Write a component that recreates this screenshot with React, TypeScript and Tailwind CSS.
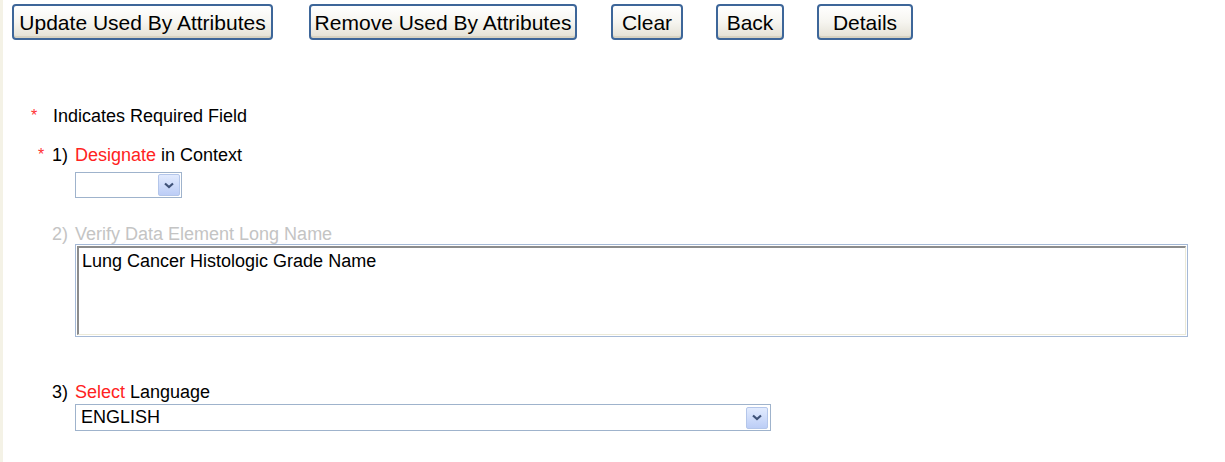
const btn =
  "h-[36px] rounded-[4px] border-2 border-[#3d6699] bg-gradient-to-b from-[#ffffff] via-[#f6f5f0] to-[#e3e0d4] text-[21px] leading-none text-black shadow-[inset_0_-2px_0_#d6d2c2] flex items-center justify-center whitespace-nowrap";

function Chevron() {
  return (
    <svg width="10" height="7" viewBox="0 0 10 7">
      <path d="M1 1.5 L5 5 L9 1.5" fill="none" stroke="#3f5278" strokeWidth="2.2" />
    </svg>
  );
}

function DropButton() {
  return (
    <span className="flex h-[22px] w-[22px] items-center justify-center rounded-[2px] border border-[#b4c6ea] bg-gradient-to-b from-[#e2ebfe] to-[#bccdf6]">
      <Chevron />
    </span>
  );
}

export default function App() {
  return (
    <div
      className="h-[462px] w-[1225px] border-l-[3px] border-[#f4f2e6] bg-white text-black"
      style={{ fontFamily: '"Liberation Sans", Arial, sans-serif' }}
    >
      <div className="flex pt-[4px] pl-[9px]">
        <button className={`${btn} w-[261px]`}>Update Used By Attributes</button>
        <button className={`${btn} ml-[36px] w-[268px]`}>Remove Used By Attributes</button>
        <button className={`${btn} ml-[34px] w-[72px]`}>Clear</button>
        <button className={`${btn} ml-[33px] w-[68px]`}>Back</button>
        <button className={`${btn} ml-[33px] w-[96px]`}>Details</button>
      </div>

      <div className="mt-[66px] flex items-center pl-[28px] text-[18px] leading-[20px]">
        <span className="w-[22px] text-[16px] text-[#ff3333]">*</span>
        <span>Indicates Required Field</span>
      </div>

      <div className="mt-[19px] flex items-center pl-[35px] text-[18px] leading-[20px]">
        <span className="w-[14px] text-[16px] text-[#ff3333]">*</span>
        <span className="w-[23px]">1)</span>
        <span className="text-[#ff2222]">Designate</span>
        <span>&nbsp;in Context</span>
      </div>

      <div className="ml-[72px] mt-[7px] flex h-[26px] w-[107px] items-center justify-end border border-[#9fb3cc] bg-white pr-[1px]">
        <DropButton />
      </div>

      <div className="mt-[26px] flex pl-[49px] text-[18px] leading-[20px] text-[#c4c4c4]">
        <span className="w-[23px]">2)</span>
        <span>Verify Data Element Long Name</span>
      </div>

      <div className="ml-[72px] mt-0 h-[93px] w-[1113px] border border-[#a5b9d6] p-[1px]">
        <div className="h-full w-full border-l-2 border-t-2 border-r border-b border-l-[#8c8c8c] border-t-[#8c8c8c] border-r-[#ecead8] border-b-[#ecead8] px-[3px] pt-[3px] text-[18px] leading-[20px]">
          Lung Cancer Histologic Grade Name
        </div>
      </div>

      <div className="mt-[45px] flex pl-[49px] text-[18px] leading-[20px]">
        <span className="w-[23px]">3)</span>
        <span className="text-[#ff2222]">Select</span>
        <span>&nbsp;Language</span>
      </div>

      <div className="ml-[72px] mt-[2px] flex h-[27px] w-[696px] items-center justify-between border border-[#9fb3cc] bg-white pl-[5px] pr-[2px] text-[18px]">
        <span>ENGLISH</span>
        <DropButton />
      </div>
    </div>
  );
}
